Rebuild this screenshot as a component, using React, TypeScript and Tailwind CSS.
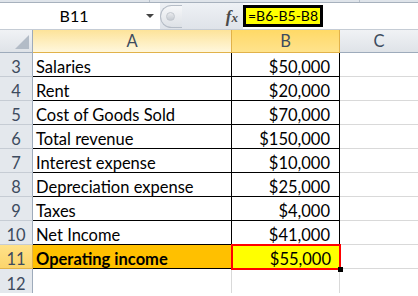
import React from "react";

type Row = { n: number; label: string; value: string };

const rows: Row[] = [
  { n: 3, label: "Salaries", value: "$50,000" },
  { n: 4, label: "Rent", value: "$20,000" },
  { n: 5, label: "Cost of Goods Sold", value: "$70,000" },
  { n: 6, label: "Total revenue", value: "$150,000" },
  { n: 7, label: "Interest expense", value: "$10,000" },
  { n: 8, label: "Depreciation expense", value: "$25,000" },
  { n: 9, label: "Taxes", value: "$4,000" },
  { n: 10, label: "Net Income", value: "$41,000" },
];

export default function App() {
  return (
    <div className="w-[418px] h-[296px] overflow-hidden bg-white font-['Lato','Liberation_Sans',sans-serif] text-black">
      {/* ribbon edge */}
      <div className="h-[3px] bg-[#dfe4ea] flex border-b border-[#a7b1bd]">
        <div className="w-[150px] border-r border-[#b9c1cb]" />
        <div className="w-[210px] border-r border-[#b9c1cb]" />
      </div>

      {/* formula bar */}
      <div className="h-[27px] flex items-stretch border-b border-[#c5ccd5]">
        <div className="w-[160px] shrink-0 flex items-center bg-white">
          <span className="w-[146px] text-center text-[16px] leading-none pl-[2px]">B11</span>
          <span className="w-0 h-0 border-l-[4px] border-r-[4px] border-t-[4px] border-l-transparent border-r-transparent border-t-[#444]" />
        </div>
        <div className="w-[83px] shrink-0 flex items-center bg-gradient-to-b from-[#eef1f5] to-[#dfe3e9]">
          <div className="h-[23px] w-[22px] rounded-l-full border border-r-0 border-[#b5bcc6] bg-gradient-to-b from-[#f6f7f9] to-[#dde1e6] flex items-center pl-[5px]">
            <span className="w-[9px] h-[9px] rounded-full bg-gradient-to-b from-[#e9ebee] to-[#c5cad1] border border-[#c2c7ce]" />
          </div>
          <span className="ml-auto mr-[5px] font-['Liberation_Serif',serif] italic font-bold text-[17px] text-[#4a4a4a] leading-none">
            f<span className="text-[13px]">x</span>
          </span>
        </div>
        <div className="flex-1 bg-white flex items-center">
          <div className="h-[22px] w-[80px] whitespace-nowrap bg-[#ffff00] border-[3px] border-black flex items-center justify-center text-[14px] leading-none">
            =B6-B5-B8
          </div>
        </div>
      </div>

      {/* sheet */}
      <div className="grid grid-cols-[33px_199px_108px_1fr] text-[16.5px]">
        {/* column headers */}
        <div className="h-[23px] bg-gradient-to-b from-[#f0f2f5] to-[#dfe3e8] border-r border-b border-[#9eabbb] relative">
          <span className="absolute right-[3px] bottom-[3px] w-0 h-0 border-b-[14px] border-l-[14px] border-b-[#b3bcc7] border-l-transparent" />
        </div>
        <div className="h-[23px] flex items-center justify-center bg-gradient-to-b from-[#fde399] to-[#fff7dc] border-r border-b border-[#e1b24a] text-[#3d4b5e]">
          A
        </div>
        <div className="h-[23px] flex items-center justify-center bg-gradient-to-b from-[#ffd966] to-[#ffe38c] border-r border-b border-[#e1b24a] text-[#3d4b5e]">
          B
        </div>
        <div className="h-[23px] flex items-center justify-center bg-gradient-to-b from-[#f0f2f5] to-[#dfe3e8] border-b border-[#9eabbb] text-[#3d4b5e]">
          C
        </div>

        {rows.map((r) => (
          <React.Fragment key={r.n}>
            <div className="h-[24px] flex items-end justify-center pb-[1px] bg-[#e4e8ed] border-r border-b border-[#9eabbb] border-b-[#c6ccd4] text-[#3d4b5e] leading-none">
              {r.n}
            </div>
            <div className="h-[24px] flex items-end pl-[3px] pb-[1px] border-r border-b border-black leading-none">
              {r.label}
            </div>
            <div className="h-[24px] flex items-end justify-end pr-[9px] pb-[1px] border-r border-b border-black leading-none">
              {r.value}
            </div>
            <div className="h-[24px] border-b border-[#d9d9d9]" />
          </React.Fragment>
        ))}

        {/* row 11 */}
        <div className="h-[24px] flex items-end justify-center pb-[1px] bg-gradient-to-b from-[#ffe189] to-[#fbd56b] border-r border-b border-[#e1b24a] text-[#3d4b5e] leading-none">
          11
        </div>
        <div className="h-[24px] flex items-end pl-[3px] pb-[1px] bg-[#ffc000] border-r border-b border-black font-bold leading-none">
          Operating income
        </div>
        <div className="h-[24px] relative">
          <div className="absolute -left-[1px] -top-[1px] w-[110px] h-[26px] bg-[#ffff00] border-[2px] border-[#ff0000] flex items-end justify-end pr-[8px] pb-[1px] leading-none">
            $55,000
          </div>
          <span className="absolute right-[-3px] bottom-[-3px] w-[5px] h-[5px] bg-black" />
        </div>
        <div className="h-[24px] border-b border-[#d9d9d9]" />

        {/* row 12 */}
        <div className="h-[24px] flex items-end justify-center pb-[1px] bg-[#e4e8ed] border-r border-[#9eabbb] text-[#3d4b5e] leading-none">
          12
        </div>
        <div className="h-[24px] border-r border-[#d9d9d9]" />
        <div className="h-[24px] border-r border-[#d9d9d9]" />
        <div className="h-[24px]" />
      </div>
    </div>
  );
}
